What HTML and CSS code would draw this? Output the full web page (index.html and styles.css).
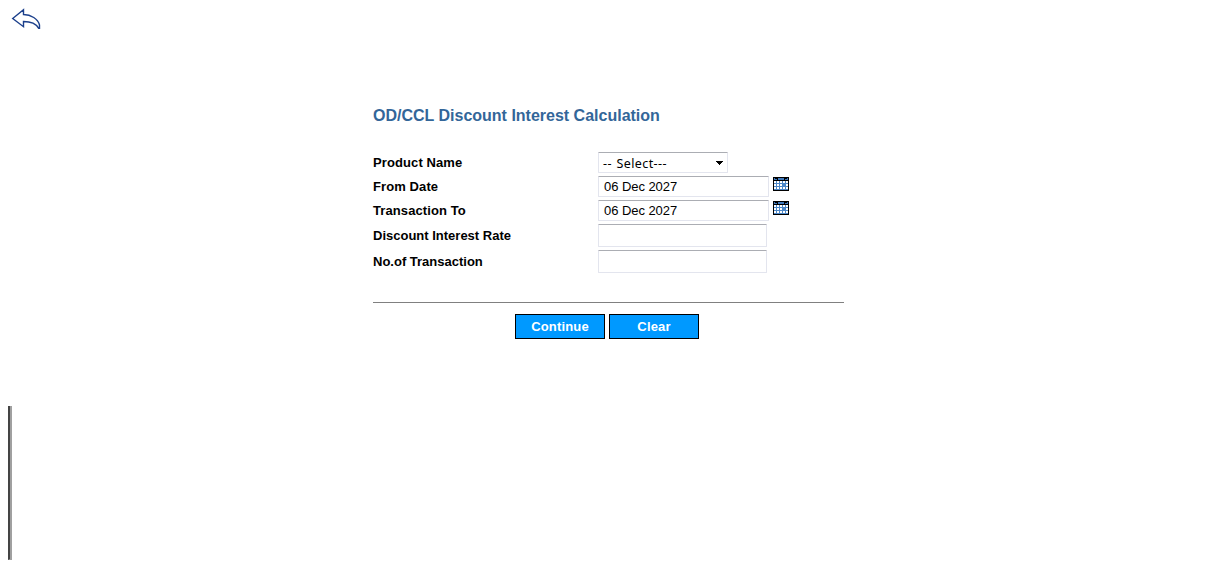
FILE: index.html
```html
<!DOCTYPE html>
<html lang="en">
<head>
<meta charset="utf-8">
<title>OD/CCL Discount Interest Calculation</title>
<link rel="stylesheet" href="styles.css">
</head>
<body>
<header class="top">
  <svg class="back" width="32" height="24" viewBox="0 0 32 24" fill="none" stroke="#1b3f8b" stroke-width="1.4"><path d="M4.700 10.500 15.500 1.800V6.500C23 6.500 30 11 31.500 17V20.300H30.700C28 15.500 22 13.500 15.500 13.500V18.700Z"/></svg>
</header>
<main class="panel">
  <h1 class="title">OD/CCL Discount Interest Calculation</h1>
  <form class="form">
    <div class="row">
      <span class="label">Product Name</span>
      <span class="field select"><span class="choice">-- Select---</span><svg width="8" height="4" viewBox="0 0 8 4" shape-rendering="crispEdges"><path d="M0 0h8L4 4z"/></svg></span>
    </div>
    <div class="row">
      <span class="label">From Date</span>
      <span class="field date">06 Dec 2027</span>
      <svg class="cal" width="16" height="14" viewBox="0 0 16 14" shape-rendering="crispEdges"><path d="M0 0h16v14H0z"/><path fill="#3f78ba" d="M1 1h14v2H1z"/><path d="M2 1h2v1H2zM12 1h2v1h-2zM4 1h1v2H4zM11 1h1v2h-1z"/><path fill="#4d88c8" d="M1 4h14v9H1z"/><path fill="#fff" d="M1 4h2v2H1zM4 4h2v2H4zM7 4h2v2H7zM10 4h2v2h-2zM13 4h2v2h-2zM1 7h2v2H1zM4 7h2v2H4zM7 7h2v2H7zM13 7h2v2h-2zM1 10h2v2H1zM4 10h2v2H4zM7 10h2v2H7zM10 10h2v2h-2zM13 10h2v2h-2z"/></svg>
    </div>
    <div class="row">
      <span class="label">Transaction To</span>
      <span class="field date">06 Dec 2027</span>
      <svg class="cal" width="16" height="14" viewBox="0 0 16 14" shape-rendering="crispEdges"><path d="M0 0h16v14H0z"/><path fill="#3f78ba" d="M1 1h14v2H1z"/><path d="M2 1h2v1H2zM12 1h2v1h-2zM4 1h1v2H4zM11 1h1v2h-1z"/><path fill="#4d88c8" d="M1 4h14v9H1z"/><path fill="#fff" d="M1 4h2v2H1zM4 4h2v2H4zM7 4h2v2H7zM10 4h2v2h-2zM13 4h2v2h-2zM1 7h2v2H1zM4 7h2v2H4zM7 7h2v2H7zM13 7h2v2h-2zM1 10h2v2H1zM4 10h2v2H4zM7 10h2v2H7zM10 10h2v2h-2zM13 10h2v2h-2z"/></svg>
    </div>
    <div class="row tall">
      <span class="label">Discount Interest Rate</span>
      <span class="field number"></span>
    </div>
    <div class="row tall">
      <span class="label">No.of Transaction</span>
      <span class="field number"></span>
    </div>
  </form>
  <div class="actions">
    <button class="btn" type="button">Continue</button>
    <button class="btn" type="button">Clear</button>
  </div>
</main>
<div class="bar"></div>
</body>
</html>
```
FILE: styles.css
```css
body {
  margin: 0;
  height: 576px;
  overflow: hidden;
  background: #fff;
  color: #000;
  font: 13px/16px "Liberation Sans", Arial, sans-serif;
}
.top { height: 98px; padding: 8px 0 0 8px; }
.back { display: block; overflow: visible; }
.panel { width: 471px; height: 300px; margin-left: 373px; }
.title {
  margin: 0;
  padding: 1px 0 27px;
  color: #336699;
  font-size: 16px;
  line-height: 18px;
  white-space: nowrap;
}
.form { height: 150px; border-bottom: 1px solid #808080; }
.row { display: flex; height: 24px; }
.tall { height: 26px; }
.label { width: 225px; line-height: 21px; font-weight: bold; }
.row:not(.tall) .label { letter-spacing: .1px; }
.tall .label { line-height: 23px; }
.field {
  box-sizing: border-box;
  height: 21px;
  border: 1px solid #e3e5ee;
  border-top-color: #abadb3;
  border-radius: 1px;
}
.select {
  display: flex;
  align-items: center;
  justify-content: space-between;
  width: 130px;
  padding: 1px 4px 0;
  font: 12px/18px "Noto Sans", Tahoma, sans-serif;
}
.choice { padding-top: 2px; font-size: 12.5px; letter-spacing: .4px; word-spacing: 1px; }
.date { width: 171px; padding-left: 5px; line-height: 19px; letter-spacing: -.06px; }
.number { width: 169px; height: 23px; }
.cal { margin: 1px 0 0 4px; }
.actions { display: flex; justify-content: center; gap: 4px; padding: 11px 3px 0 0; }
.btn {
  width: 90px;
  height: 25px;
  padding: 0;
  border: 1px solid #000;
  background: #0099ff;
  color: #fff;
  font: bold 13px "Liberation Sans", Arial, sans-serif;
  letter-spacing: .15px;
}
.bar {
  box-sizing: border-box;
  width: 4px;
  height: 154px;
  margin-left: 8px;
  border: 2px solid #a0a0a0;
  border-top-width: 0;
  border-left-color: #444;
  border-bottom-width: 1px;
}
```
